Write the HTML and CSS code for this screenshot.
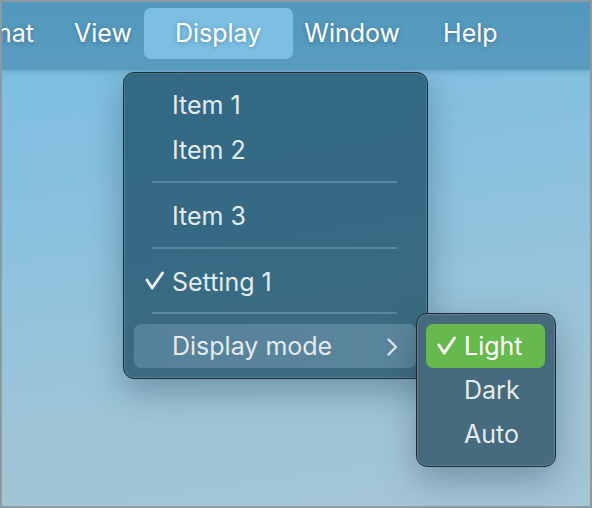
FILE: index.html
```html
<!DOCTYPE html>
<html>
<head>
<meta charset="utf-8">
<link rel="stylesheet" href="styles.css">
</head>
<body>
<div class="screen">
  <div class="menubar">
    <div class="clip"><span class="mb-item">Format</span></div>
    <span class="mb-item">View</span>
    <span class="mb-item active">Display</span>
    <span class="mb-item">Window</span>
    <span class="mb-item">Help</span>
  </div>
  <div class="desktop"></div>

  <div class="menu main-menu">
    <div class="row">Item 1</div>
    <div class="row">Item 2</div>
    <div class="sep"></div>
    <div class="row">Item 3</div>
    <div class="sep"></div>
    <div class="row"><svg class="check" viewBox="0 0 20 20"><path d="M2 9.5 L7.5 18 L18.5 2"/></svg>Setting 1</div>
    <div class="sep sep-short"></div>
    <div class="row hover">Display mode<svg class="chev" viewBox="0 0 12 18"><path d="M2.5 1.5 L10 9 L2.5 16.5"/></svg></div>
  </div>

  <div class="menu sub-menu">
    <div class="row selected"><svg class="check" viewBox="0 0 20 20"><path d="M2 9.5 L7.5 18 L18.5 2"/></svg>Light</div>
    <div class="row">Dark</div>
    <div class="row">Auto</div>
  </div>
</div>
</body>
</html>
```

FILE: styles.css
```css
html, body {
  margin: 0;
  padding: 0;
}

body {
  font-family: "Inter", "Noto Sans", sans-serif;
}

.screen {
  position: relative;
  width: 592px;
  height: 508px;
  box-sizing: border-box;
  border: 2px solid #8e9aa1;
  display: flex;
  flex-direction: column;
  overflow: hidden;
}

.menubar {
  height: 68px;
  flex: none;
  display: flex;
  align-items: flex-start;
  background: linear-gradient(#5298bd, #5a9cc0);
  color: #ffffff;
  font-size: 25px;
  box-shadow: 0 1px 6px rgba(30, 70, 100, 0.25);
  position: relative;
  z-index: 1;
}

.clip {
  width: 32px;
  flex: none;
  display: flex;
  justify-content: flex-end;
  overflow: hidden;
  white-space: nowrap;
  margin-right: 18.5px;
}

.mb-item {
  position: relative;
  padding: 0 21.5px;
  white-space: nowrap;
  text-shadow: 0 1px 4px rgba(20, 50, 80, 0.35);
  line-height: 62px;
}

.clip .mb-item {
  padding: 0;
}

.mb-item.active::before {
  content: "";
  position: absolute;
  left: -9px;
  right: -10px;
  top: 6px;
  bottom: 5px;
  border-radius: 7px;
  background: #7cbfe3;
  z-index: -1;
}

.desktop {
  flex: 1;
  background: linear-gradient(172deg, #7dbee2 0%, #8cc2de 35%, #a1c5d6 75%, #a4c6d6 100%);
}

.menu {
  position: absolute;
  box-sizing: border-box;
  border: 1px solid #1d2c35;
  border-radius: 11px;
  box-shadow: inset 0 0 0 1px rgba(255, 255, 255, 0.14), 0 12px 34px rgba(20, 50, 70, 0.35);
  font-size: 25px;
  color: #e3ebef;
  display: flex;
  flex-direction: column;
}

.main-menu {
  left: 121px;
  top: 70px;
  width: 305px;
  height: 307px;
  padding: 9px 11px 0 10px;
  background: linear-gradient(170deg, #336985 0%, #366a84 50%, #3e6b80 100%);
}

.row {
  position: relative;
  height: 45px;
  display: flex;
  align-items: center;
  padding-left: 38px;
  flex: none;
}

.sep {
  height: 21px;
  flex: none;
  display: flex;
  align-items: center;
  padding: 0 19px 0 18px;
}

.sep::before {
  content: "";
  flex: 1;
  height: 2px;
  margin-top: -2px;
  background: rgba(160, 190, 205, 0.35);
}

.sep-short {
  height: 20px;
}

.row.hover {
  height: 44px;
  border-radius: 7px;
  background: linear-gradient(90deg, #56819a, #5b879d);
}

.check {
  position: absolute;
  width: 19px;
  height: 19px;
  left: 11px;
  top: 12px;
  fill: none;
  stroke: #e8eff2;
  stroke-width: 2.9;
  stroke-linecap: round;
  stroke-linejoin: round;
}

.chev {
  position: absolute;
  right: 18px;
  top: 14px;
  width: 12px;
  height: 18px;
  fill: none;
  stroke: #dfe8ec;
  stroke-width: 2.4;
  stroke-linecap: round;
  stroke-linejoin: round;
}

.sub-menu {
  left: 414px;
  top: 311px;
  width: 140px;
  height: 154px;
  padding: 10px 10px 0 9px;
  background: linear-gradient(175deg, #46697d, #466b7f);
  z-index: 2;
}

.sub-menu .row {
  height: 44px;
  padding-left: 38px;
}

.sub-menu .row.selected {
  background: #66b94c;
  border-radius: 7px;
  color: #ffffff;
}

.sub-menu .check {
  left: 11px;
  stroke: #ffffff;
}
```
